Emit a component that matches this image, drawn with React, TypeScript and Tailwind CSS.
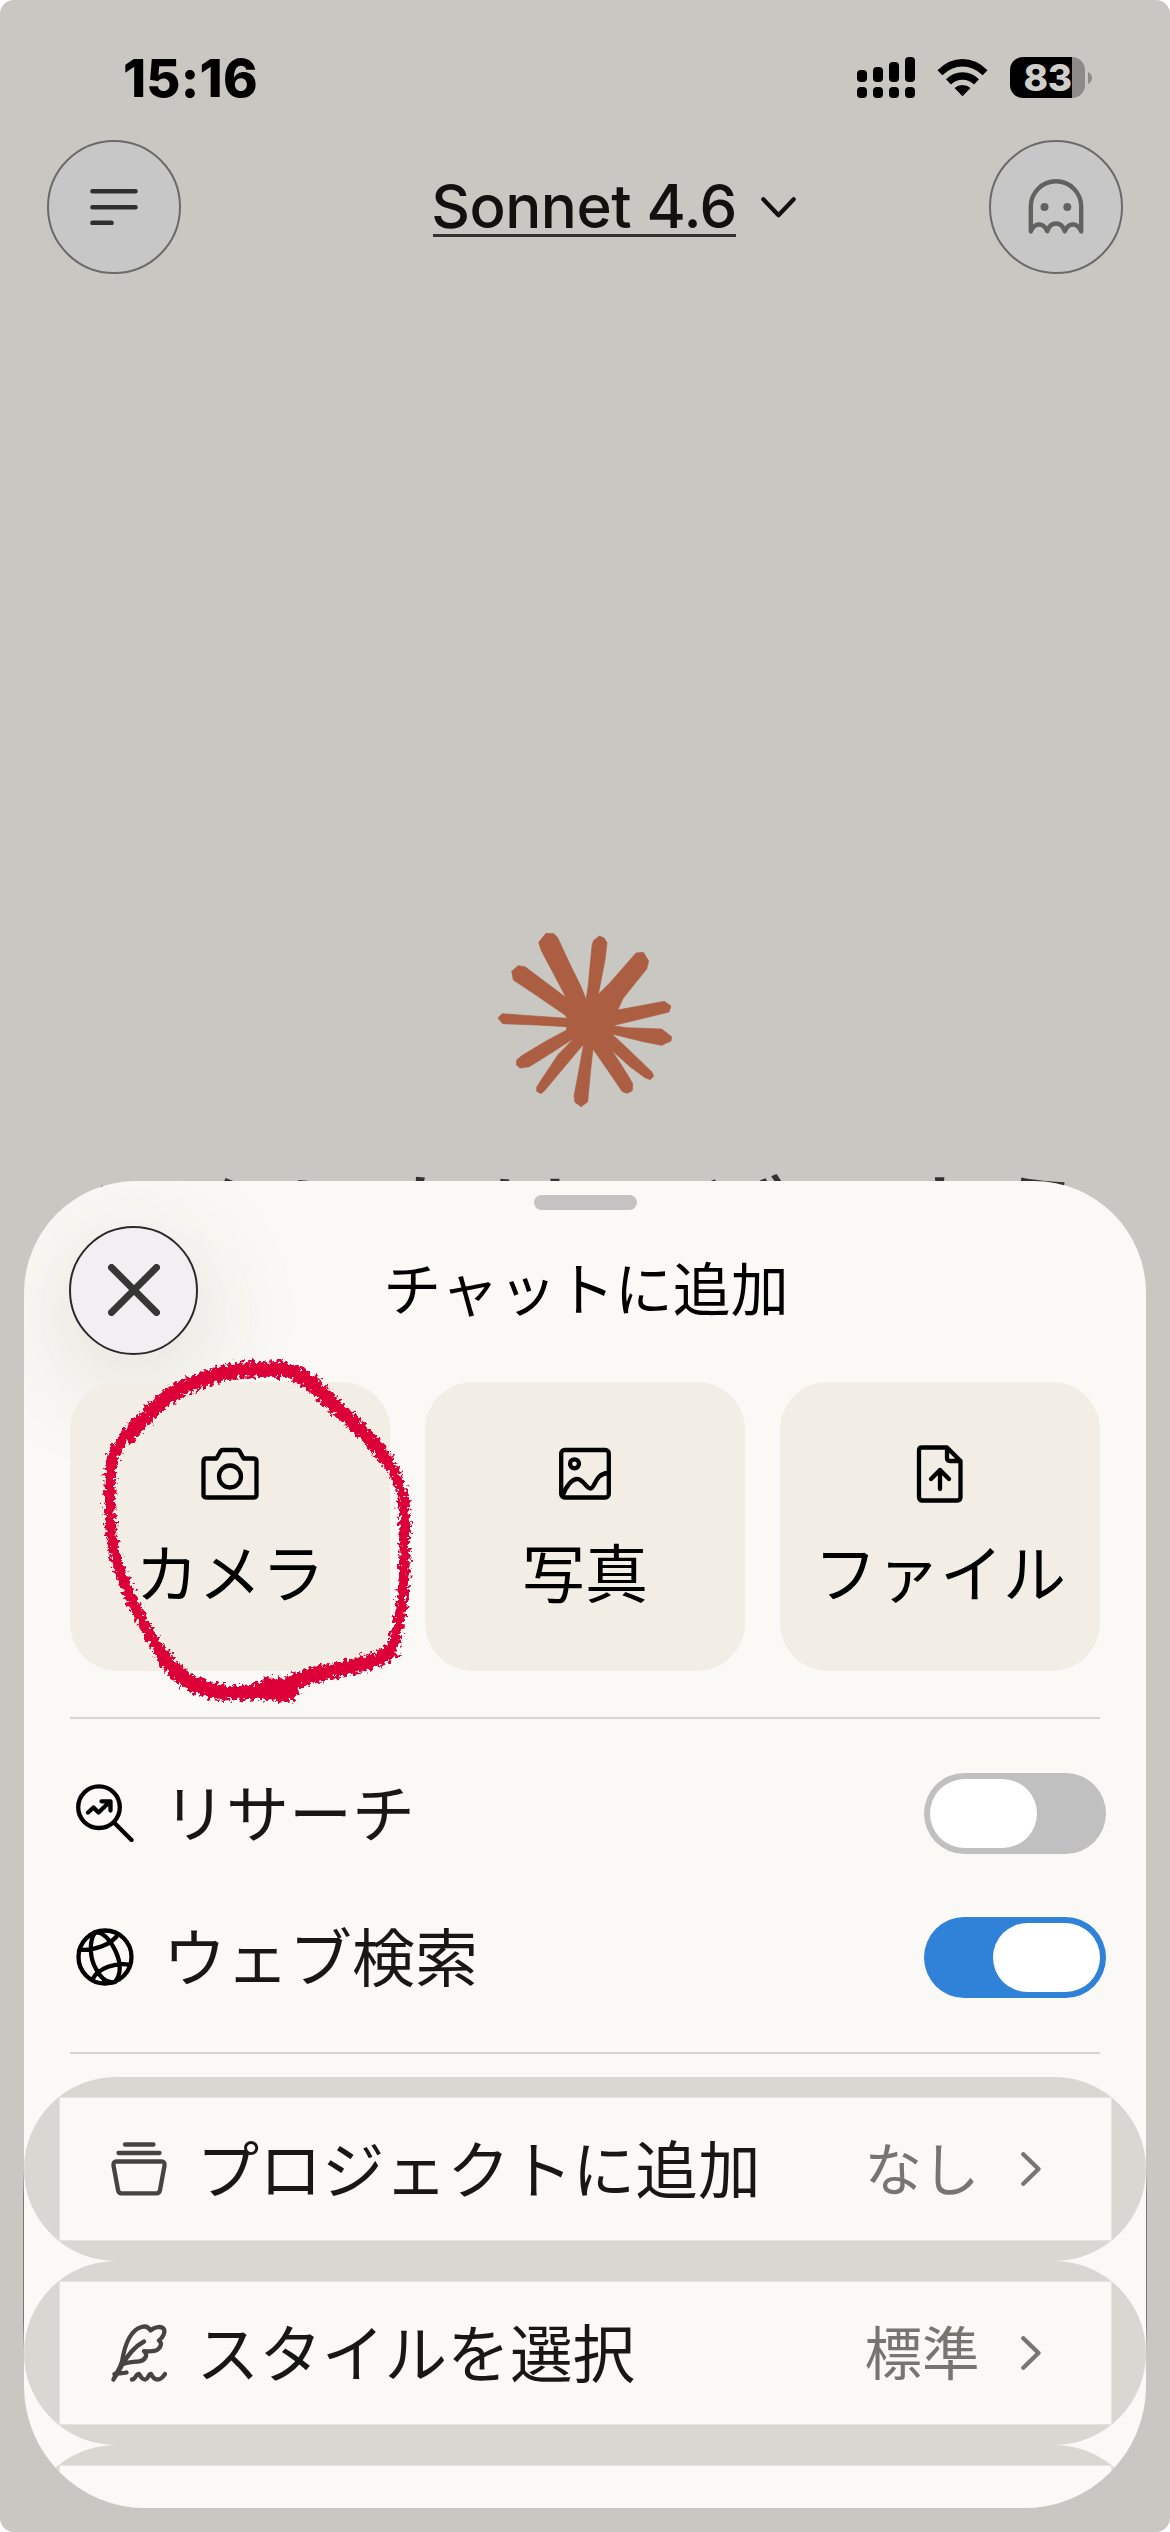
import type { ReactNode } from 'react';

const jp = "font-['Noto_Sans_CJK_JP',sans-serif]";

function StatusBar() {
  return (
    <div className="flex h-[140px] items-start justify-between pt-[57px] pr-[78px] pl-[123px]">
      <span className="mt-[-4px] text-[52.5px] leading-[51px] font-extrabold tracking-[0.2px] text-black">15:16</span>
      <div className="flex h-[41px] items-start">
        <svg width="58" height="41" viewBox="0 0 58 41" className="mr-[22px]">
          <rect x="0" y="13" width="10" height="12" rx="4" />
          <rect x="16" y="10" width="10" height="15" rx="4" />
          <rect x="32" y="5" width="10" height="20" rx="4" />
          <rect x="48" y="0" width="10" height="25" rx="4" />
          <rect x="0" y="30" width="10" height="11" rx="4" />
          <rect x="16" y="30" width="10" height="11" rx="4" />
          <rect x="32" y="30" width="10" height="11" rx="4" />
          <rect x="48" y="30" width="10" height="11" rx="4" />
        </svg>
        <svg width="51" height="41" viewBox="0 0 51 41" className="mr-[22px]">
          <path d="M0.5 13.3 Q11.5 2 25.5 2 Q39.5 2 50.5 13.3 L45.7 18.3 Q36.5 9.5 25.5 9.5 Q14.5 9.5 5.3 18.3 Z" />
          <path d="M9 22.3 Q16 15.3 25.5 15.3 Q35 15.3 42 22.3 L37 27.5 Q32.3 22.8 25.5 22.8 Q18.7 22.8 14 27.5 Z" />
          <path d="M17.5 31 Q21 28 25.5 28 Q30 28 33.5 31 L25.5 39.3 Z" />
        </svg>
        <div className="flex h-[41px] w-[75px] items-center justify-center rounded-[13px] bg-[linear-gradient(to_right,#000_62px,#8c8b88_62px)]">
          <span className="text-[37px] leading-[41px] font-extrabold tracking-[-0.5px] text-[#cfcec9]">83</span>
        </div>
        <svg width="4" height="12" viewBox="0 0 4 12" className="mt-[15px] ml-[3px]">
          <path d="M0 0 Q4 2 4 6 Q4 10 0 12 Z" fill="#8c8b88" />
        </svg>
      </div>
    </div>
  );
}

function Header() {
  return (
    <header className="flex h-[134px] items-center justify-between px-[47px]">
      <button className="flex size-[134px] items-center justify-center rounded-full border-2 border-[#6a6a68] bg-[#c7c7c8]">
        <svg width="48" height="36" viewBox="0 0 48 36" fill="none" stroke="#2f2f2e" strokeWidth="4.6" strokeLinecap="round">
          <path d="M2.5 2.3H45.5M2.5 18.2H45.5M2.5 33.9H21.5" />
        </svg>
      </button>
      <div className="flex items-center gap-[25px] pl-[58px]">
        <div className="flex h-[60px] w-[303px] items-start justify-center border-b-[3px] border-[#33322e]">
          <span className="text-[60px] leading-[59px] font-medium tracking-[-0.5px] whitespace-nowrap text-[#11110f]">Sonnet 4.6</span>
        </div>
        <svg width="35" height="21" viewBox="0 0 35 21" fill="none" stroke="#11110f" strokeWidth="4.2" strokeLinecap="round" strokeLinejoin="round">
          <path d="M2.3 2.3 17.5 18.3 32.7 2.3" />
        </svg>
      </div>
      <button className="flex size-[134px] items-center justify-center rounded-full border-2 border-[#6a6a68] bg-[#c7c7c8]">
        <svg width="56" height="56" viewBox="0 0 56 56" fill="none" stroke="#626261" strokeWidth="4.4" strokeLinecap="round" strokeLinejoin="round">
          <path d="M2.8 52.5V27.5A25.2 25.2 0 0 1 53.2 27.5V52.5C50 44.5 41.5 42 36.7 52.2C33.5 42 22.5 42 19.3 52.2C14.5 42 6 44.5 2.8 52.5Z" />
          <circle cx="16.5" cy="28" r="4" fill="#626261" stroke="none" />
          <circle cx="39.3" cy="28" r="4" fill="#626261" stroke="none" />
        </svg>
      </button>
    </header>
  );
}

function Starburst() {
  return (
    <svg width="230" height="220" viewBox="0 0 690 660" fill="#ac5e43" stroke="#ac5e43" strokeWidth="2" strokeLinejoin="round">
      <path d="M206 97 228 70 252 71 263 83 300 163 334 232 348 268 354 232 366 108 370 92 388 78 402 84 411 98 405 150 385 253 420 218 498 129 520 127 536 153 530 177 460 264 443 300 583 274 603 288 597 306 520 325 428 347 470 353 575 357 605 380 603 393 575 406 520 395 426 372 470 413 545 485 551 498 541 509 525 503 480 470 425 421 450 458 481 508 488 522 487 542 472 550 457 545 425 498 369 417 362 480 353 576 333 590 315 577 312 558 325 490 341 402 290 463 223 543 213 551 200 544 200 532 212 512 265 433 313 384 250 425 178 470 150 474 139 464 140 450 155 437 230 392 290 360 290 350 200 345 98 341 84 324 96 311 150 315 292 325 285 315 190 250 130 210 125 184 144 167 165 170 230 219 287 262 280 247 214 122Z" />
    </svg>
  );
}

function CameraIcon() {
  return (
    <svg width="58" height="58" viewBox="0 0 58 58" fill="none" stroke="#000" strokeWidth="4.3" strokeLinejoin="round">
      <path d="M5.5 13.5H15.5L19.5 6.2Q20.3 5 21.8 5H36.4Q37.8 5 38.6 6.2L42.5 13.5H52.5Q55.5 13.5 55.5 16.5V49.5Q55.5 52.5 52.5 52.5H5.5Q2.5 52.5 2.5 49.5V16.5Q2.5 13.5 5.5 13.5Z" />
      <circle cx="29" cy="31.5" r="11" />
    </svg>
  );
}

function PhotoIcon() {
  return (
    <svg width="58" height="58" viewBox="0 0 58 58" fill="none" stroke="#000" strokeWidth="4.3" strokeLinejoin="round">
      <rect x="5.2" y="5" width="47.6" height="47.5" rx="3.5" />
      <circle cx="18.5" cy="18.8" r="4.5" />
      <path d="M6.5 51C10 41 16 34 21.5 34C27 34 30.5 43.5 34.5 43.5C39 43.5 39 28.5 52 28" />
    </svg>
  );
}

function FileIcon() {
  return (
    <svg width="58" height="58" viewBox="0 0 58 58" fill="none" stroke="#000" strokeWidth="4.3" strokeLinejoin="round" strokeLinecap="round">
      <path d="M11 2.5H36L49.5 16V52Q49.5 55.5 46 55.5H11.5Q8 55.5 8 52V5.5Q8 2.5 11 2.5M36 3.5V13Q36 16 39 16H48.5M29 44V25M20 34 29 25 38 34" />
    </svg>
  );
}

function ResearchIcon() {
  return (
    <svg width="58" height="58" viewBox="0 0 58 58" fill="none" stroke="#000" strokeWidth="4.3" strokeLinejoin="round" strokeLinecap="round">
      <circle cx="23" cy="23.2" r="20.8" />
      <path d="M38.5 39 55.5 56M12 28.5 17.5 23.5 22.5 28.5 34 17.5M25.5 17.3H34.5V26.5" />
    </svg>
  );
}

function GlobeIcon() {
  return (
    <svg width="58" height="58" viewBox="0 0 58 58" fill="none" stroke="#000" strokeWidth="4.3" strokeLinecap="round">
      <circle cx="29" cy="29" r="26.5" />
      <path d="M19 4.5C13 13 13.5 30 20 41C24 49 30 54 36 54.5M19 4.5C28 3.5 35 14 39.5 23C45 35 46 45 39 54M3.5 21.5C18 23.5 36 16 42 6.5M16 52C22 40 40 34 54 36.8" />
    </svg>
  );
}

function ProjectIcon() {
  return (
    <svg width="56" height="54" viewBox="0 0 56 54" fill="none" stroke="#444442" strokeWidth="4.3" strokeLinejoin="round" strokeLinecap="round">
      <path d="M14 2.5H42.5M7.5 11H48.5M5.5 19.5H50.5Q54 19.5 53.5 23.5L49 48Q48.3 51.3 45.5 51.3H10.5Q7.7 51.3 7 48L2.5 23.5Q2 19.5 5.5 19.5Z" />
    </svg>
  );
}

function StyleIcon() {
  return (
    <svg width="56" height="58" viewBox="0 0 56 58" fill="none" stroke="#444442" strokeWidth="4.3" strokeLinejoin="round" strokeLinecap="round">
      <path d="M2.5 55.5C5 49 9 45 11 37.5C14 19 20 6 30.5 3C35 1.5 37.5 3 39.5 6.5C43 3.5 49 1.5 52.5 4.5C55 8 51.5 14 48 16.5C52 19.5 49 26 43.5 26.8C40 27.8 37 27.3 33 27.2C37.5 31 34 36.5 28 37.3C22 38 17 38 11 40.5M33 17.5C23 23 16 32 10.5 42C8 47 5 51 2.5 55.5M3.5 50C8 48.5 10 50 15.5 48.5M21 55.5C25 55 24.5 50 28 50C30.5 54 31.5 55.5 34.5 55.5C37.5 55 37 50 40 50C42 54 43.5 55.5 46.5 55.5C50.5 55.5 52 53 54 50" />
    </svg>
  );
}

function Tile({ icon, label }: { icon: ReactNode; label: string }) {
  return (
    <button className="flex h-[289px] w-[320px] flex-col items-center rounded-[48px] bg-[#f1ede5]/95 pt-[63px]">
      {icon}
      <span className="mt-[22px] text-[63px] leading-[90px] whitespace-nowrap text-black">{label}</span>
    </button>
  );
}

function ToggleRow({ icon, label, on = false }: { icon: ReactNode; label: string; on?: boolean }) {
  return (
    <div className="flex h-[144px] items-center pr-[40px] pl-[52px]">
      {icon}
      <span className="-mt-[6px] ml-[29px] flex-1 text-[63px] leading-[90px] text-[#171716]">{label}</span>
      <div
        className={
          on
            ? 'flex h-[81px] w-[182px] justify-end rounded-full bg-[#2f82d8] p-[6px]'
            : 'flex h-[81px] w-[182px] justify-start rounded-full bg-[#c0c0c0] p-[6px]'
        }
      >
        <div className="h-[69px] w-[107px] rounded-full bg-white" />
      </div>
    </div>
  );
}

function LinkRow({ icon, label, value }: { icon: ReactNode; label: string; value: string }) {
  return (
    <div className="h-[184px] shrink-0 rounded-[92px] bg-[#d8d7d2] px-[34.5px] py-[20px]">
      <div className="flex h-[144px] items-center border border-[#e4e3de] bg-[#faf9f5] pr-[70px] pl-[51px]">
        {icon}
        <span className="-mt-[7px] ml-[30px] flex-1 text-[62.7px] leading-[90px] whitespace-nowrap text-[#171716]">{label}</span>
        <span className="-mt-[7px] text-[57.5px] leading-[84px] text-[#777570]">{value}</span>
        <svg width="20" height="34" viewBox="0 0 20 34" fill="none" stroke="#777570" strokeWidth="4.3" strokeLinecap="round" strokeLinejoin="round" className="ml-[41px]">
          <path d="M2.3 2.3 17.5 17 2.3 31.7" />
        </svg>
      </div>
    </div>
  );
}

// hand-drawn marker around the first tile
function Scribble() {
  return (
    <svg width="400" height="380" viewBox="0 0 1200 1140" fill="none" stroke="#dd0039" strokeLinecap="round" strokeLinejoin="round" className="pointer-events-none">
      <filter id="crayon" x="-5%" y="-5%" width="110%" height="110%">
        <feTurbulence type="fractalNoise" baseFrequency="0.09" numOctaves="3" seed="4" result="noise" />
        <feDisplacementMap in="SourceGraphic" in2="noise" scale="38" xChannelSelector="R" yChannelSelector="G" />
      </filter>
      <g filter="url(#crayon)">
        <path strokeWidth="46" d="M265 285C320 225 370 175 430 142C500 110 560 92 620 90C680 88 705 82 745 92C795 105 835 145 870 185" />
        <path strokeWidth="34" d="M265 285Q215 335 213 375C210 440 205 490 212 560C217 640 240 690 258 740C285 800 320 880 370 945" />
        <path strokeWidth="42" d="M865 180C925 235 990 290 1040 360" />
        <path strokeWidth="32" d="M1040 360C1075 410 1088 450 1092 510C1097 580 1093 650 1092 720C1085 790 1080 860 1055 925" />
        <path strokeWidth="46" d="M1050 935C1000 972 930 982 870 994C820 1004 770 1020 735 1035C660 1062 560 1064 500 1048C450 1032 400 1000 370 945" />
        <path strokeWidth="68" d="M685 1046 742 1052" />
      </g>
    </svg>
  );
}

function Sheet() {
  return (
    <section className={`${jp} absolute top-[1181px] left-[24px] flex h-[1327px] w-[1122px] flex-col overflow-hidden rounded-t-[112px] rounded-b-[122px] bg-[#faf9f5]`}>
      <div className="mt-[14px] h-[15px] w-[103px] shrink-0 self-center rounded-full bg-[#c4c3c1]" />
      <div className="mt-[16px] flex h-[128px] shrink-0 items-center pl-[45px]">
        <button className="flex size-[129px] shrink-0 items-center justify-center rounded-full border-2 border-[#2a2a2a] bg-[#f1eff1] shadow-[0_24px_110px_rgba(60,60,40,0.17)]">
          <svg width="52" height="52" viewBox="0 0 52 52" fill="none" stroke="#363635" strokeWidth="7" strokeLinecap="round">
            <path d="M3.5 3.5 48.5 48.5M48.5 3.5 3.5 48.5" />
          </svg>
        </button>
        <h1 className="-mt-[9px] mr-[172px] flex-1 text-center text-[58px] leading-[84px] text-black">チャットに追加</h1>
      </div>
      <div className="z-10 mt-[28px] flex shrink-0 gap-[35px] pl-[46px]">
        <Tile icon={<CameraIcon />} label="カメラ" />
        <Tile icon={<PhotoIcon />} label="写真" />
        <Tile icon={<FileIcon />} label="ファイル" />
      </div>
      <div className="mx-[46px] mt-[46px] h-[2px] shrink-0 bg-[#d6d5d0]" />
      <div className="mt-[22px] flex h-[311px] shrink-0 flex-col">
        <ToggleRow icon={<ResearchIcon />} label="リサーチ" />
        <ToggleRow icon={<GlobeIcon />} label="ウェブ検索" on />
      </div>
      <div className="mx-[46px] h-[2px] shrink-0 bg-[#d6d5d0]" />
      <div className="mt-[23px] flex flex-col">
        <LinkRow icon={<ProjectIcon />} label="プロジェクトに追加" value="なし" />
        <LinkRow icon={<StyleIcon />} label="スタイルを選択" value="標準" />
        <div className="h-[184px] shrink-0 rounded-[92px] bg-[#d8d7d2] px-[34.5px] py-[20px]">
          <div className="h-[144px] border border-[#e4e3de] bg-[#faf9f5]" />
        </div>
      </div>
      <div className="absolute top-[159px] left-[16px] z-20">
        <Scribble />
      </div>
    </section>
  );
}

export default function App() {
  return (
    <div className="h-[2532px] w-[1170px] bg-white">
      <main className="relative flex h-[2532px] w-[1170px] flex-col overflow-hidden rounded-[14px] bg-[#c9c7c2] font-['Inter',sans-serif]">
        <StatusBar />
        <Header />
        <div className="mt-[636px] flex flex-col items-center">
          <Starburst />
          <p className={`${jp} mt-[23px] text-[101.5px] leading-[120px] whitespace-nowrap text-[#33322e]`}>こんにちは、どのよう</p>
        </div>
        <Sheet />
        {/* shade along the sheet's edges */}
        <div className="absolute top-[2170px] left-[23px] h-[180px] w-px bg-[linear-gradient(transparent,#777_15%,#777_85%,transparent)]" />
        <div className="absolute top-[2170px] left-[1146px] h-[180px] w-px bg-[linear-gradient(transparent,#777_15%,#777_85%,transparent)]" />
      </main>
    </div>
  );
}
